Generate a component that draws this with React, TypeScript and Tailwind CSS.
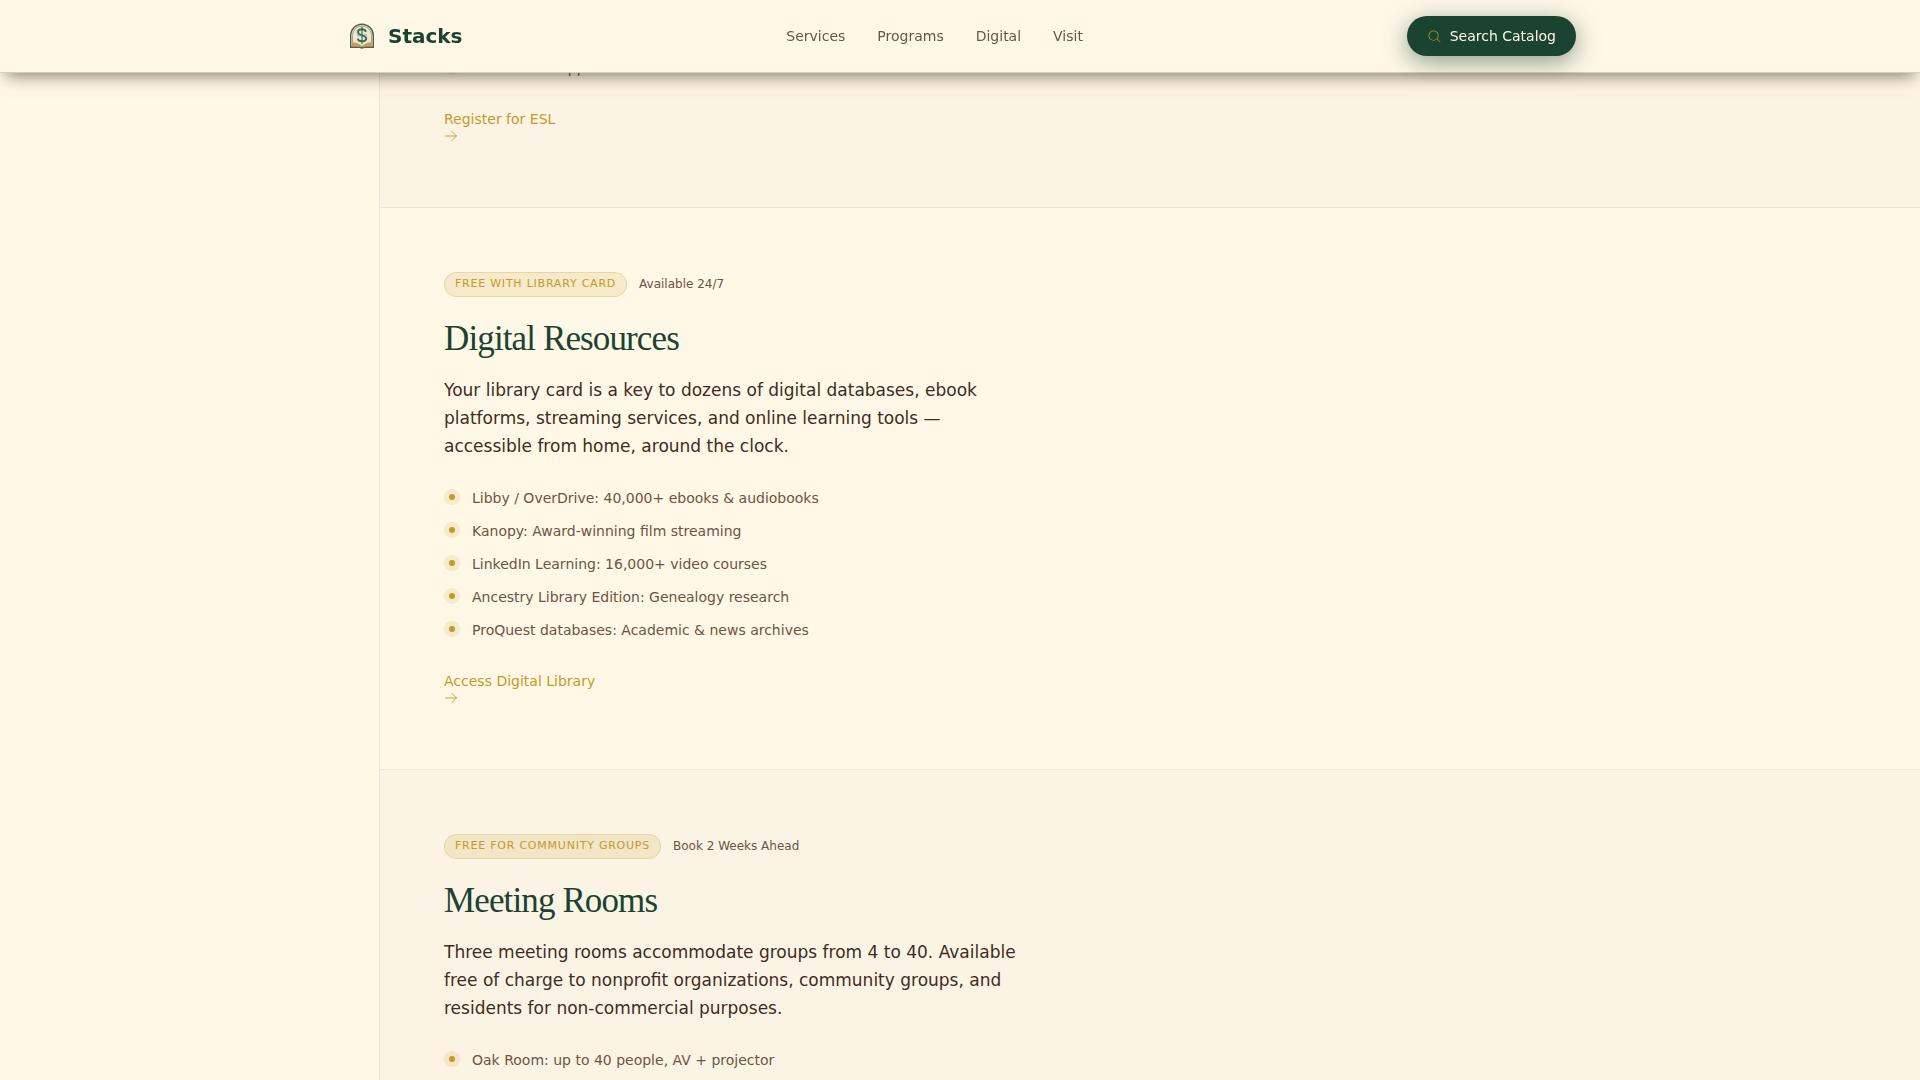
import { PiMagnifyingGlassLight } from 'react-icons/pi'

interface Service {
  id: string;
  badge?: string;
  note?: string;
  title?: string;
  description?: string;
  features: string[];
  cta?: string;
}

const navLinks = ['Services', 'Programs', 'Digital', 'Visit']

const services: Service[] = [
  {
    id: 'esl',
    features: ['Homework support'],
    cta: 'Register for ESL'
  },
  {
    id: 'digital',
    badge: 'Free with library card',
    note: 'Available 24/7',
    title: 'Digital Resources',
    description: 'Your library card is a key to dozens of digital databases, ebook platforms, streaming services, and online learning tools — accessible from home, around the clock.',
    features: [
      'Libby / OverDrive: 40,000+ ebooks & audiobooks',
      'Kanopy: Award-winning film streaming',
      'LinkedIn Learning: 16,000+ video courses',
      'Ancestry Library Edition: Genealogy research',
      'ProQuest databases: Academic & news archives'
    ],
    cta: 'Access Digital Library'
  },
  {
    id: 'rooms',
    badge: 'Free for community groups',
    note: 'Book 2 Weeks Ahead',
    title: 'Meeting Rooms',
    description: 'Three meeting rooms accommodate groups from 4 to 40. Available free of charge to nonprofit organizations, community groups, and residents for non-commercial purposes.',
    features: ['Oak Room: up to 40 people, AV + projector']
  }
]

function Logo() {
  return (
    <svg viewBox="0 0 32 32" className="w-8 h-8" fill="none" aria-hidden="true">
      <path d="M6.700 27.300V15.500a11.300 11.300 0 0 1 22.600 0v11.800z" fill="#ece8d6" stroke="#4a6349" strokeWidth="1.400" />
      <path d="M8.500 22v-6.500a9.500 9.500 0 0 1 19 0V22" stroke="#a59a72" strokeWidth="0.900" />
      {/* open book */}
      <path d="M8 26.500v-4.300c4 .2 7.500 1.400 10 3.600 2.500-2.200 6-3.400 10-3.600v4.300z" fill="#d09a55" />
      <path d="M9 21.200c3.800.300 6.800 1.700 9 4 2.200-2.300 5.200-3.700 9-4" stroke="#f1e2bb" strokeWidth="1" />
      <path d="M6 27.400h9.500l2.500.8 2.500-.8H30" stroke="#5a6244" strokeWidth="1.200" />
      {/* S shaped vine */}
      <path d="M22 11.800c-.7-1.700-2.100-2.500-4-2.500-2.300 0-4 1.100-4 2.900 0 3.900 8.200 2.300 8.200 6.100 0 1.900-1.800 3-4.200 3-2.100 0-3.700-.8-4.300-2.600" stroke="#3d6755" strokeWidth="1.900" />
      <path d="M18 6.800v17.200" stroke="#3d6755" strokeWidth="1.200" />
      <path d="M13 15.500l2.500.5M23 15l-2.500-.5M12.500 12l1.500 1M23.500 18l-1.500-.5" stroke="#7d9478" strokeWidth="0.800" />
    </svg>
  )
}

function Arrow() {
  return (
    <svg viewBox="0 0 14 14" className="mt-0.5 w-3.5 h-3.5" fill="none" stroke="currentColor" strokeLinecap="round" strokeLinejoin="round" aria-hidden="true">
      <path d="M1.500 7h11M8 2.500L12.500 7 8 11.500" strokeWidth="0.900" />
    </svg>
  )
}

function Header() {
  return (
    <header className="fixed inset-x-0 top-0 z-10 border-b border-[#d8cfba] bg-[#fff8e7] shadow-[0_8px_16px_-6px_rgba(44,24,16,0.6)]">
      <div className="max-w-7xl h-18 mx-auto px-6 flex items-center justify-between">
        <a href="#" className="flex items-center gap-3 text-xl font-bold text-[#1b4332]">
          <Logo /> Stacks
        </a>
        <nav className="flex gap-8 text-sm text-[#6d5443]">
          {navLinks.map(link => (
            <a key={link} href={`#${link.toLowerCase()}`}>{link}</a>
          ))}
        </nav>
        <button className="h-10 px-5 flex items-center gap-2 rounded-full bg-[#1b4332] text-sm text-[#fff8e7] shadow-[0_6px_24px_rgba(27,67,50,0.5)]">
          <PiMagnifyingGlassLight className="w-[15px] h-[15px] text-[#c49a2a]" />
          Search Catalog
        </button>
      </div>
    </header>
  )
}

function ServiceSection({ service }: { service: Service }) {
  return (
    <section id={service.id} className="px-16 pb-16 border-b border-[#e9e5db] odd:bg-[#fbf4e4]">
      {service.title && (
        <div className="pt-16">
          <div className="flex items-start gap-3">
            <span className="h-[25px] px-2.5 pb-px flex items-center rounded-full border border-[#c49a2a]/25 bg-[#c49a2a]/15 text-[11px] uppercase tracking-[0.07em] text-[#c49a2a]">
              {service.badge}
            </span>
            <span className="text-xs leading-6 text-[#6d5443]">{service.note}</span>
          </div>
          <h2 className="mt-[21px] font-['Liberation_Serif',serif] text-[35px] leading-[42px] tracking-tight text-[#1b4332]">
            {service.title}
          </h2>
          <p className="mt-4 mb-[27px] max-w-xl text-[17px] leading-7 text-[#3e2c23]">{service.description}</p>
        </div>
      )}
      <ul className="flex flex-col gap-2.5">
        {service.features.map(feature => (
          <li key={feature} className="flex items-start gap-3 text-sm leading-[23px] text-[#6d5443]">
            <span className="w-4 h-4 mt-0.5 shrink-0 flex items-center justify-center rounded-full bg-[#c49a2a]/15">
              <span className="w-1.5 h-1.5 rounded-full bg-[#c49a2a]" />
            </span>
            {feature}
          </li>
        ))}
      </ul>
      {service.cta && (
        <a href={`#${service.id}`} className="mt-[31px] block w-fit text-sm leading-4 text-[#c49a2a]">
          {service.cta}
          <Arrow />
        </a>
      )}
    </section>
  )
}

function App() {
  return (
    <div className="h-screen overflow-hidden flex bg-[#fff8e7] font-['DejaVu_Sans',sans-serif]">
      <Header />
      <aside className="w-[380px] shrink-0 border-r border-[#e9e3d8]" />
      {/* the first section continues underneath the fixed header */}
      <main className="flex-1 min-w-0 pt-[57px]">
        {services.map(service => (
          <ServiceSection key={service.id} service={service} />
        ))}
      </main>
    </div>
  )
}

export default App
